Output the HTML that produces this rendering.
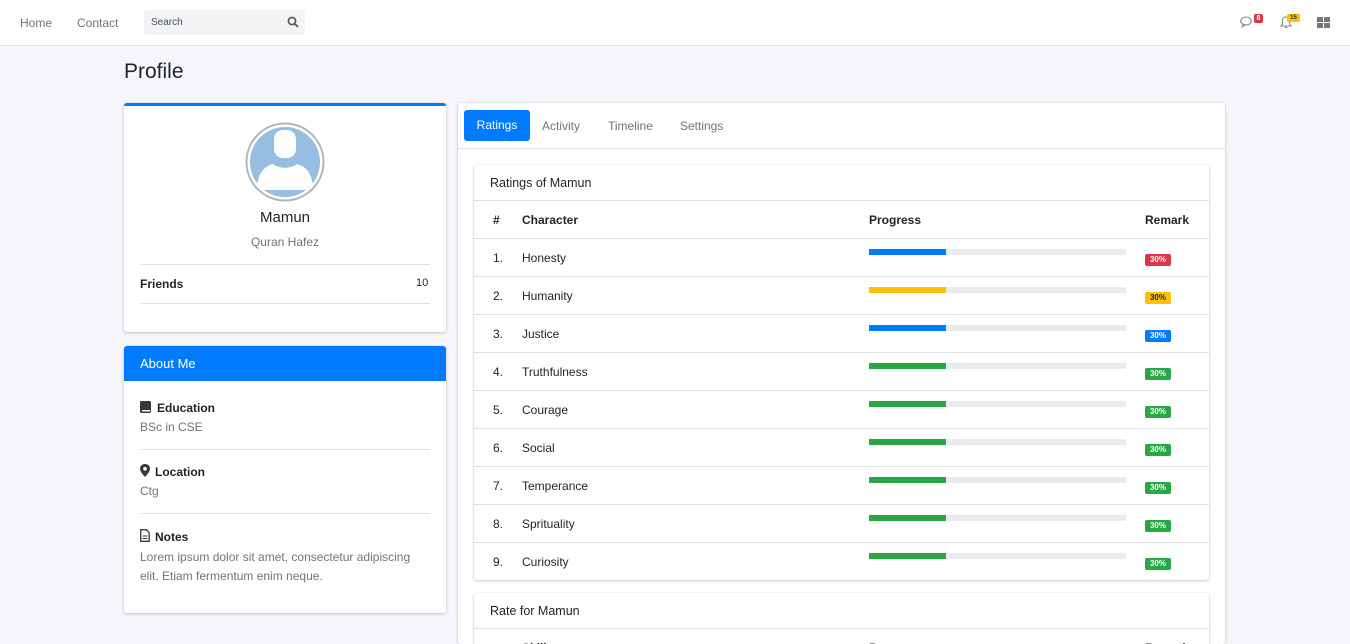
<!DOCTYPE html>
<html style="height:644px;overflow:hidden"><head><meta charset="utf-8"><style>
*{box-sizing:border-box;margin:0;padding:0}
body{width:1350px;height:644px;overflow:hidden;background:#f4f6f9;font-family:"Liberation Sans",sans-serif;color:#212529;font-size:12px;position:relative}
.abs{position:absolute}
.nav{left:0;top:0;width:1350px;height:46px;background:#fff;border-bottom:1px solid #dee2e6}
.card{background:#fff;border-radius:3px;box-shadow:0 0 1px rgba(0,0,0,.15),0 1px 3px rgba(0,0,0,.2)}
.hr{height:1px;background:#dee2e6}
.muted{color:#6c757d}
.row{position:absolute;left:0;width:735px;height:38px;border-top:1px solid #dee2e6}
.row span{position:absolute;top:12px}
.bar{position:absolute;left:395px;top:10px;width:257px;height:6px;background:#e9ecef}
.bar i{display:block;width:77px;height:6px}
.badge{position:absolute;left:671px;top:15px;width:26px;height:12px;border-radius:2px;font-size:8px;font-weight:bold;color:#fff;text-align:center;line-height:12px}
</style></head><body>
<div class="abs nav">
 <span class="abs muted" style="left:20px;top:16px;font-size:12px">Home</span>
 <span class="abs muted" style="left:77px;top:16px;font-size:12px">Contact</span>
 <div class="abs" style="left:144px;top:10px;width:161px;height:25px;background:#f2f4f6;border-radius:2px">
  <span class="abs" style="left:7px;top:7px;font-size:10px;color:#495057">Search</span>
  <svg class="abs" style="left:143px;top:6px" width="12" height="12" viewBox="0 0 12 12"><circle cx="5" cy="5" r="3.6" fill="none" stroke="#555" stroke-width="1.6"/><path d="M7.7 7.7L11 11" stroke="#555" stroke-width="1.8"/></svg>
 </div>
 <svg class="abs" style="left:1240px;top:16px" width="14" height="12" viewBox="0 0 14 12"><ellipse cx="6" cy="5" rx="5.3" ry="4" fill="none" stroke="#888" stroke-width="1.1"/><path d="M3 8.5L2 11 5.5 9" fill="none" stroke="#888"/></svg>
 <div class="abs" style="left:1254px;top:14px;width:9px;height:9px;background:#dc3545;border-radius:2px;color:#fff;font-size:7px;text-align:center;line-height:9px;font-weight:bold">8</div>
 <svg class="abs" style="left:1280px;top:16px" width="12" height="13" viewBox="0 0 12 13"><path d="M6 1C3.5 1 2.5 3 2.5 5v3L1 10h10L9.5 8V5C9.5 3 8.5 1 6 1z" fill="none" stroke="#888" stroke-width="1.1"/><path d="M4.5 11.5h3" stroke="#888"/></svg>
 <div class="abs" style="left:1287px;top:14px;width:13px;height:8px;background:#ffc107;border-radius:2px;color:#333;font-size:6px;text-align:center;line-height:8px;font-weight:bold">15</div>
 <svg class="abs" style="left:1317px;top:17px" width="13" height="11" viewBox="0 0 13 11"><rect x="0" y="0" width="6" height="5" fill="#777"/><rect x="7" y="0" width="6" height="5" fill="#777"/><rect x="0" y="6" width="6" height="5" fill="#777"/><rect x="7" y="6" width="6" height="5" fill="#777"/></svg>
</div>
<div class="abs" style="left:124px;top:60px;font-size:21px;color:#212529">Profile</div>

<div class="abs card" style="left:124px;top:103px;width:322px;height:229px;border-top:3px solid #007bff">
 <svg class="abs" style="left:121px;top:16px" width="80" height="80" viewBox="0 0 80 80"><circle cx="40" cy="40" r="38.5" fill="#fff" stroke="#adb5bd" stroke-width="2"/><circle cx="40" cy="40" r="35" fill="#97bde0"/><clipPath id="c"><circle cx="40" cy="40" r="35"/></clipPath><g clip-path="url(#c)" fill="#fff"><rect x="29" y="8" width="22" height="28" rx="9"/><path d="M12 68C12 54 17 45 28 42 34 47 46 47 52 42 63 45 68 54 68 68z"/></g></svg>
 <div class="abs" style="left:0;width:322px;top:103px;text-align:center;font-size:15px">Mamun</div>
 <div class="abs muted" style="left:0;width:322px;top:129px;text-align:center;font-size:12px">Quran Hafez</div>
 <div class="abs hr" style="left:16px;top:158px;width:290px"></div>
 <b class="abs" style="left:16px;top:171px">Friends</b>
 <span class="abs" style="left:292px;top:171px;font-size:11px">10</span>
 <div class="abs hr" style="left:16px;top:197px;width:290px"></div>
</div>

<div class="abs card" style="left:124px;top:346px;width:322px;height:267px;overflow:hidden">
 <div class="abs" style="left:0;top:0;width:322px;height:35px;background:#007bff;color:#fff;font-size:13px;padding:10px 16px">About Me</div>
 <svg class="abs" style="left:16px;top:55px" width="11" height="12" viewBox="0 0 11 12"><rect x="0" y="0" width="11" height="12" rx="1.5" fill="#343a40"/><rect x="2" y="9" width="8" height="1.5" fill="#fff"/></svg>
 <b class="abs" style="left:33px;top:55px">Education</b>
 <span class="abs muted" style="left:16px;top:74px">BSc in CSE</span>
 <div class="abs hr" style="left:16px;top:103px;width:290px"></div>
 <svg class="abs" style="left:16px;top:118px" width="10" height="13" viewBox="0 0 10 13"><path d="M5 0C2 0 0 2 0 4.8 0 8 5 13 5 13S10 8 10 4.8C10 2 8 0 5 0z" fill="#343a40"/><circle cx="5" cy="4.8" r="1.8" fill="#fff"/></svg>
 <b class="abs" style="left:31px;top:119px">Location</b>
 <span class="abs muted" style="left:16px;top:138px">Ctg</span>
 <div class="abs hr" style="left:16px;top:167px;width:290px"></div>
 <svg class="abs" style="left:16px;top:183px" width="10" height="13" viewBox="0 0 10 13"><path d="M.7.7h5.5l3 3v8.6H.7z" fill="none" stroke="#343a40" stroke-width="1.3"/><path d="M2.5 7h5M2.5 9.5h5" stroke="#343a40"/></svg>
 <b class="abs" style="left:31px;top:184px">Notes</b>
 <div class="abs muted" style="left:16px;top:202px;width:280px;line-height:19px;font-size:12px">Lorem ipsum dolor sit amet, consectetur adipiscing elit. Etiam fermentum enim neque.</div>
</div>

<div class="abs card" style="left:458px;top:103px;width:767px;height:541px;overflow:hidden">
 <div class="abs" style="left:6px;top:7px;width:66px;height:31px;background:#007bff;border-radius:3px;color:#fff;text-align:center;line-height:31px">Ratings</div>
 <span class="abs muted" style="left:84px;top:16px">Activity</span>
 <span class="abs muted" style="left:150px;top:16px">Timeline</span>
 <span class="abs muted" style="left:222px;top:16px">Settings</span>
 <div class="abs hr" style="left:0;top:45px;width:767px"></div>
 <div class="abs card" style="left:16px;top:62px;width:735px;height:415px">
  <span class="abs" style="left:16px;top:11px;font-size:12.5px">Ratings of Mamun</span>
  <div class="row" style="top:35px"><b style="position:absolute;left:19px;top:12px">#</b><b style="position:absolute;left:48px;top:12px">Character</b><b style="position:absolute;left:395px;top:12px">Progress</b><b style="position:absolute;left:671px;top:12px">Remark</b></div>
  <div class="row" style="top:73px"><span style="left:19px">1.</span><span style="left:48px">Honesty</span><div class="bar"><i style="background:#007bff"></i></div><div class="badge" style="background:#dc3545">30%</div></div>
  <div class="row" style="top:111px"><span style="left:19px">2.</span><span style="left:48px">Humanity</span><div class="bar"><i style="background:#ffc107"></i></div><div class="badge" style="background:#ffc107;color:#212529">30%</div></div>
  <div class="row" style="top:149px"><span style="left:19px">3.</span><span style="left:48px">Justice</span><div class="bar"><i style="background:#007bff"></i></div><div class="badge" style="background:#007bff">30%</div></div>
  <div class="row" style="top:187px"><span style="left:19px">4.</span><span style="left:48px">Truthfulness</span><div class="bar"><i style="background:#28a745"></i></div><div class="badge" style="background:#28a745">30%</div></div>
  <div class="row" style="top:225px"><span style="left:19px">5.</span><span style="left:48px">Courage</span><div class="bar"><i style="background:#28a745"></i></div><div class="badge" style="background:#28a745">30%</div></div>
  <div class="row" style="top:263px"><span style="left:19px">6.</span><span style="left:48px">Social</span><div class="bar"><i style="background:#28a745"></i></div><div class="badge" style="background:#28a745">30%</div></div>
  <div class="row" style="top:301px"><span style="left:19px">7.</span><span style="left:48px">Temperance</span><div class="bar"><i style="background:#28a745"></i></div><div class="badge" style="background:#28a745">30%</div></div>
  <div class="row" style="top:339px"><span style="left:19px">8.</span><span style="left:48px">Sprituality</span><div class="bar"><i style="background:#28a745"></i></div><div class="badge" style="background:#28a745">30%</div></div>
  <div class="row" style="top:377px"><span style="left:19px">9.</span><span style="left:48px">Curiosity</span><div class="bar"><i style="background:#28a745"></i></div><div class="badge" style="background:#28a745">30%</div></div>
 </div>
 <div class="abs card" style="left:16px;top:490px;width:735px;height:60px">
  <span class="abs" style="left:16px;top:11px;font-size:12.5px">Rate for Mamun</span>
  <div class="row" style="top:35px;height:25px"><b style="position:absolute;left:48px;top:12px">Skill</b><b style="position:absolute;left:395px;top:12px">Progress</b><b style="position:absolute;left:671px;top:12px">Remark</b></div>
 </div>
</div>
</body></html>
